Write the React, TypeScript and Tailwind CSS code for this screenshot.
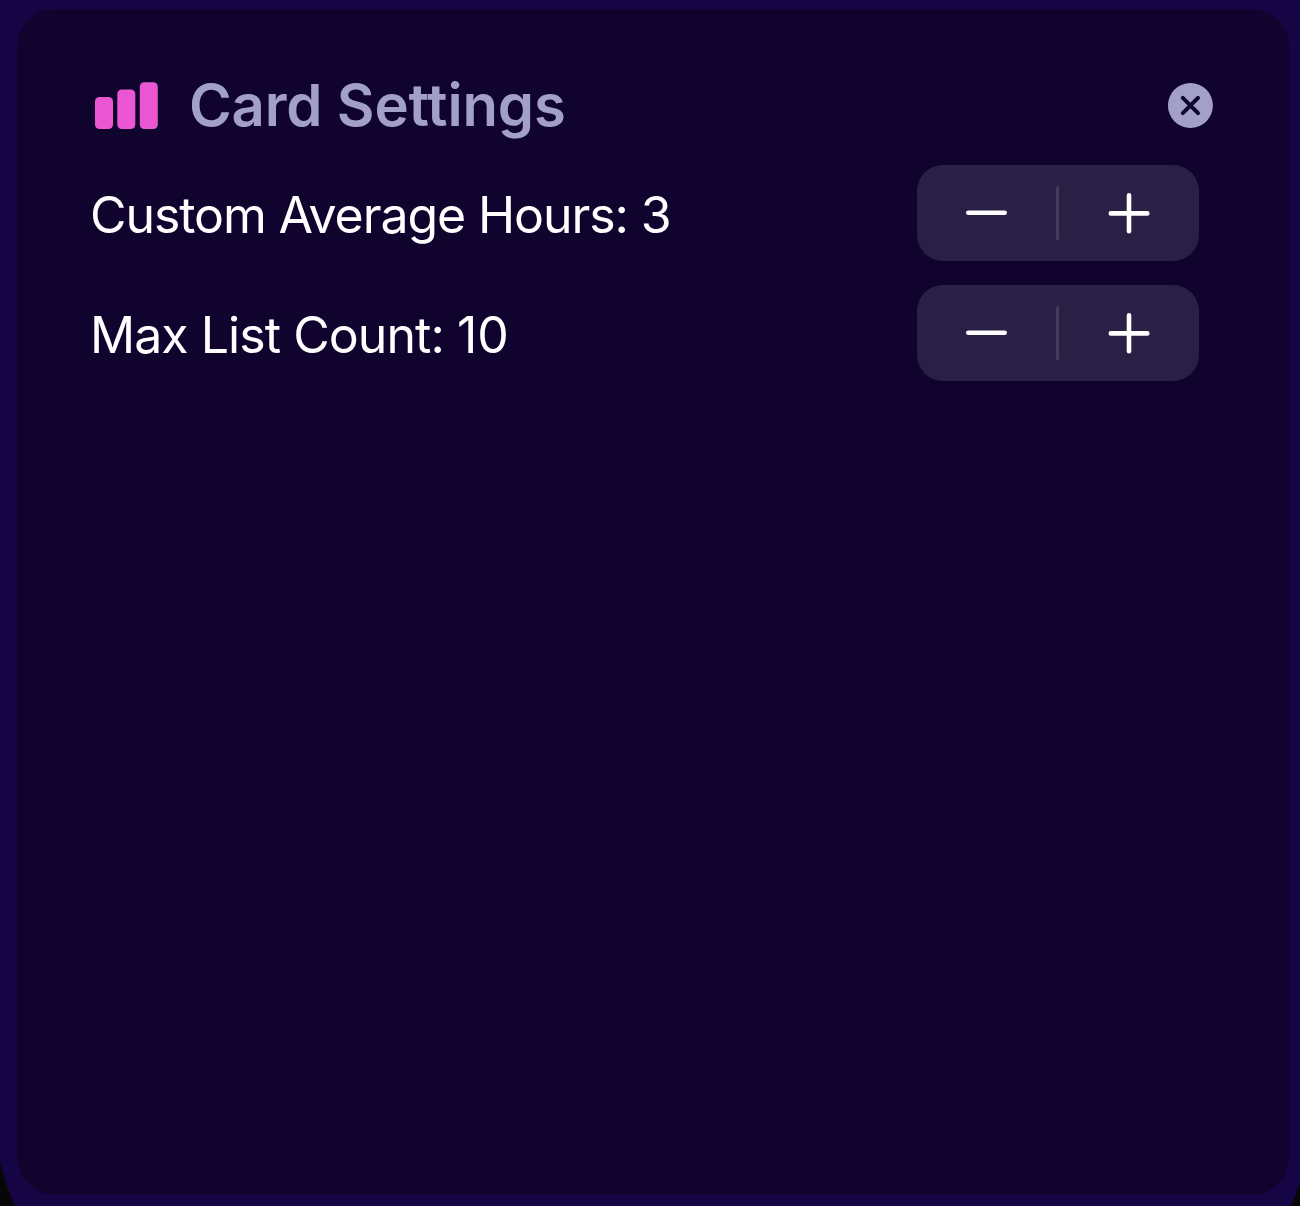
import { useState } from "react";

type StepperProps = { label: string; onChange: (delta: number) => void };

function Stepper({ label, onChange }: StepperProps) {
  return (
    <div className="flex h-24 w-[282px] items-center rounded-[26px] bg-[#2a1f44]">
      <button aria-label={`Decrease ${label}`} onClick={() => onChange(-1)} className="flex h-full w-[139px] items-center justify-center">
        <svg width="41" height="42" viewBox="0 0 41 42" fill="none" stroke="white" strokeWidth="4.6" strokeLinecap="round">
          <path d="M2.3 20.7H38.7" />
        </svg>
      </button>
      <span className="h-[54px] w-[3px] rounded-full bg-[#453c59]" />
      <button aria-label={`Increase ${label}`} onClick={() => onChange(1)} className="flex h-full w-[140px] items-center justify-center">
        <svg width="42" height="42" viewBox="0 0 42 42" fill="none" stroke="white" strokeWidth="4.6" strokeLinecap="round">
          <path d="M2.8 21.4H39.3M21 3.2V39.2" />
        </svg>
      </button>
    </div>
  );
}

export default function App() {
  const [hours, setHours] = useState(3);
  const [count, setCount] = useState(10);

  return (
    <main className="relative h-[1206px] w-[1300px] overflow-hidden bg-[#160545] pt-[9px] pl-[17px] font-['Inter',sans-serif]">
      <svg className="absolute bottom-0 left-0" width="16" height="48" viewBox="0 0 16 48" fill="#070707">
        <path d="M0 3Q5 26 15 48H0Z" />
      </svg>
      <svg className="absolute right-0 bottom-0" width="10" height="24" viewBox="0 0 10 24" fill="#070707">
        <path d="M10 0Q6 13 1 24H10Z" />
      </svg>
      <section className="h-[1186px] w-[1272px] rounded-[38px] bg-[#10032e] px-[73px] pt-[60px]">
        <header className="flex h-[72px] items-center">
          <svg className="ml-[5px] shrink-0" width="63" height="48" viewBox="0 0 63 48" fill="#eb57d3">
            <rect x="0" y="16" width="18" height="32" rx="4.5" />
            <rect x="22.3" y="8.5" width="18" height="39.5" rx="4.5" />
            <rect x="44.8" y="1.2" width="18" height="46.8" rx="4.5" />
          </svg>
          <h1 className="ml-[31px] text-[58px] leading-[72px] font-semibold tracking-[-0.15px] whitespace-nowrap text-[#a3a0c8]">Card Settings</h1>
          <button aria-label="Close" className="mr-[3px] ml-auto">
            <svg width="46" height="46" viewBox="0 0 46 46">
              <circle cx="23.4" cy="23.5" r="22.5" fill="#a3a0c8" />
              <path d="M15.8 15.9L31 31.1M31 15.9L15.8 31.1" fill="none" stroke="#10032e" strokeWidth="4" strokeLinecap="round" />
            </svg>
          </button>
        </header>
        <div className="mt-6 flex flex-col gap-6">
          <div className="flex h-24 items-center justify-between pr-[17px]">
            <span className="pt-[3px] text-[50px] leading-[60px] tracking-[-1.09px] whitespace-nowrap text-white">Custom Average Hours: {hours}</span>
            <Stepper label="average hours" onChange={(delta) => setHours(hours + delta)} />
          </div>
          <div className="flex h-24 items-center justify-between pr-[17px]">
            <span className="pt-[3px] text-[50px] leading-[60px] tracking-[-0.95px] whitespace-nowrap text-white">
              Max List Count: <span className="tracking-normal">{count}</span>
            </span>
            <Stepper label="list count" onChange={(delta) => setCount(count + delta)} />
          </div>
        </div>
      </section>
    </main>
  );
}
